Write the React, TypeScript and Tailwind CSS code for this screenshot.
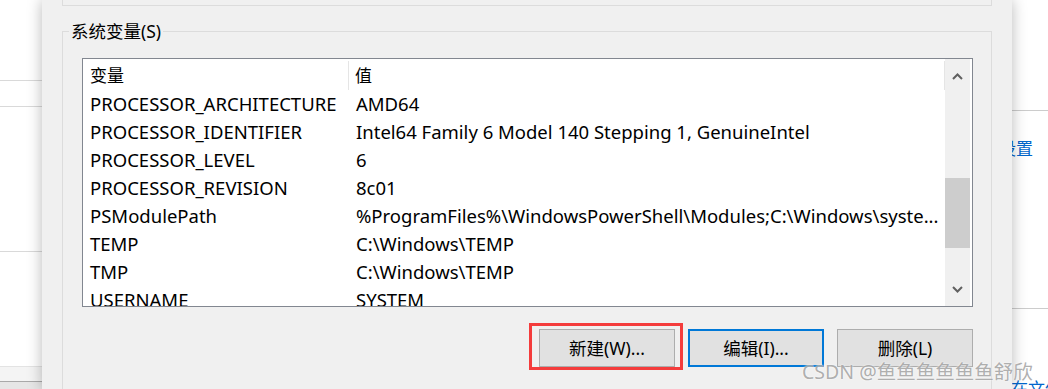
const rows: [string, string][] = [
  ["PROCESSOR_ARCHITECTURE", "AMD64"],
  ["PROCESSOR_IDENTIFIER", "Intel64 Family 6 Model 140 Stepping 1, GenuineIntel"],
  ["PROCESSOR_LEVEL", "6"],
  ["PROCESSOR_REVISION", "8c01"],
  ["PSModulePath", "%ProgramFiles%\\WindowsPowerShell\\Modules;C:\\Windows\\syste..."],
  ["TEMP", "C:\\Windows\\TEMP"],
  ["TMP", "C:\\Windows\\TEMP"],
  ["USERNAME", "SYSTEM"],
];

function Chevron({ down }: { down?: boolean }) {
  return (
    <svg width="11" height="7" viewBox="0 0 11 7" className={down ? "rotate-180" : ""}>
      <path d="M1 6 L5.5 1.5 L10 6" fill="none" stroke="#606060" strokeWidth="2" />
    </svg>
  );
}

export default function App() {
  return (
    <div className="relative flex w-[1048px] h-[389px] overflow-hidden bg-white text-black font-['Noto_Sans','Noto_Sans_CJK_SC',sans-serif]">
      {/* window behind, left */}
      <div className="w-[42px] shrink-0 flex flex-col bg-white">
        <div className="h-[80px] shrink-0" />
        <div className="h-[26px] shrink-0 border-t border-[#d9d9d9]" />
        <div className="h-[145px] shrink-0 border-t border-[#d9d9d9]" />
        <div className="h-[115px] shrink-0 border-t border-[#d9d9d9]" />
        <div className="h-[15px] shrink-0 border-t border-[#e3e3e3] bg-[#f4f4f4]" />
        <div className="flex-1 border-t border-[#a9a9a9] bg-[#e6e6e6]" />
      </div>

      {/* dialog */}
      <div className="relative z-10 w-[970px] shrink-0 bg-[#f0f0f0] pl-[20px] shadow-[0_0_14px_rgba(0,0,0,0.28)]">
        <div className="w-[930px] h-[6px] border-x border-b border-[#dcdcdc]" />

        <fieldset className="mt-[14px] w-[930px] h-[420px] border border-[#dcdcdc]">
          <legend className="ml-[6px] px-[2px] text-[17.5px] leading-[22px]">系统变量(S)</legend>

          <div className="mt-[16px] ml-[19px] w-[891px] h-[249px] flex border border-[#828790] bg-white">
            <div className="w-[862px] flex flex-col overflow-hidden text-[18.5px]">
              <div className="flex h-[31px] shrink-0 items-center pt-[2px] text-[17px]">
                <div className="w-[266px] h-full flex items-center pl-[7px] border-r border-[#e5e5e5]">变量</div>
                <div className="flex-1 h-full flex items-center pl-[6px] border-r border-[#e5e5e5]">值</div>
              </div>
              {rows.map(([name, value]) => (
                <div key={name} className="flex h-[28px] shrink-0 items-center whitespace-nowrap">
                  <div className="w-[267px] pl-[7px]">{name}</div>
                  <div className="flex-1 pl-[6px]">{value}</div>
                </div>
              ))}
            </div>
            <div className="w-[25px] bg-[#f0f0f0] flex flex-col">
              <div className="h-[34px] flex items-center justify-center">
                <Chevron />
              </div>
              <div className="h-[85px]" />
              <div className="h-[70px] bg-[#cdcdcd]" />
              <div className="flex-1" />
              <div className="h-[34px] flex items-center justify-center">
                <Chevron down />
              </div>
            </div>
          </div>

          <div className="mt-[22px] ml-[19px] w-[891px] flex justify-end gap-[13px] text-[17.5px]">
            <div className="relative">
              <button className="w-[136px] h-[38px] bg-[#e1e1e1] border border-[#adadad]">新建(W)...</button>
              <div className="absolute -left-[10px] -right-[8px] -top-[6px] -bottom-[3px] border-[3px] border-[#f43c3c]" />
            </div>
            <button className="w-[136px] h-[38px] bg-[#e1e1e1] border-2 border-[#0078d7]">编辑(I)...</button>
            <button className="w-[136px] h-[38px] bg-[#e1e1e1] border border-[#adadad]">删除(L)</button>
          </div>
        </fieldset>
      </div>

      {/* window behind, right */}
      <div className="w-[36px] shrink-0 flex flex-col bg-white text-[17px] text-[#0066cc] whitespace-nowrap overflow-hidden">
        <div className="h-[110px] shrink-0" />
        <div className="h-[198px] shrink-0 border-t border-[#cccccc] pt-[25px]">
          <div className="-ml-[13px]">设置</div>
        </div>
        <div className="flex-1 min-h-0 border-t border-[#cccccc] pt-[70px]">
          <div className="-ml-[1px] leading-[20px]">在文件</div>
        </div>
      </div>

      {/* watermark */}
      <div className="absolute left-[802px] top-[357px] z-20 text-[19.5px] text-[#9a9a9a]/80 [text-shadow:0_0_2px_#ffffff]">
        CSDN @鱼鱼鱼鱼鱼鱼舒欣
      </div>
    </div>
  );
}
